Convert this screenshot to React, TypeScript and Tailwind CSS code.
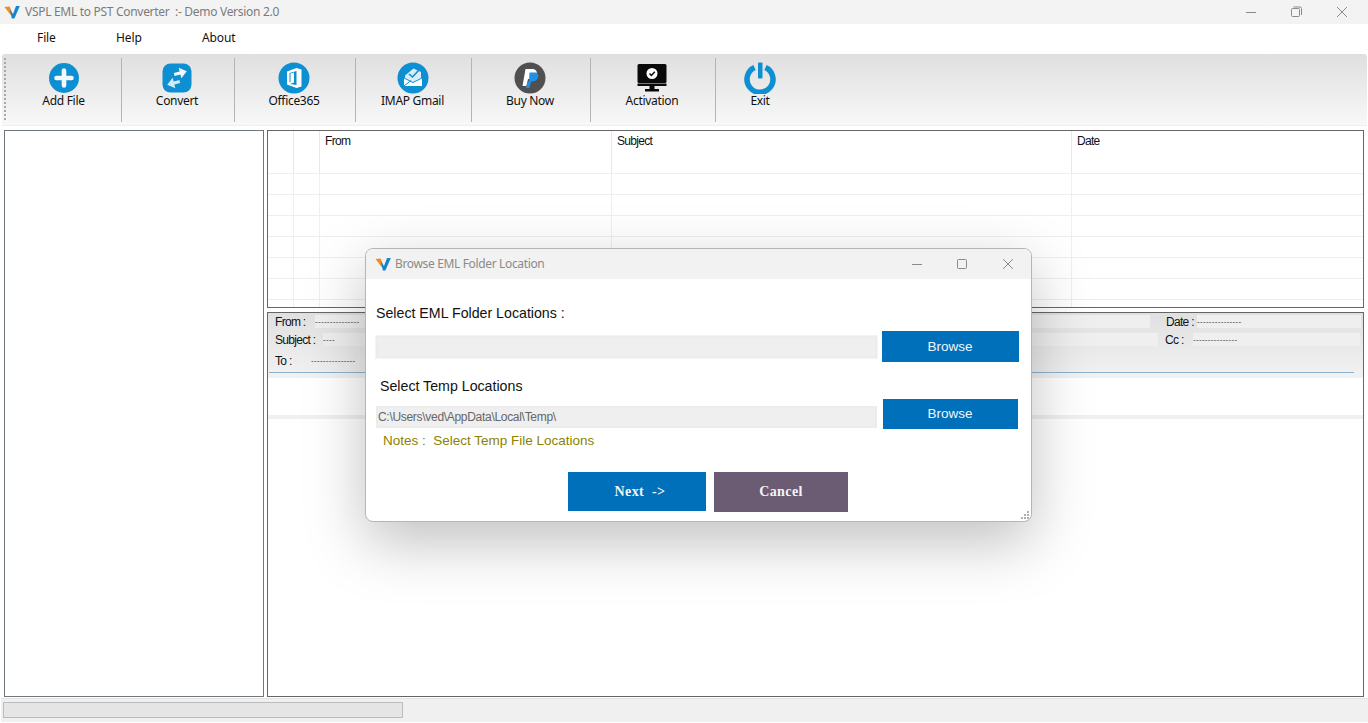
import React from 'react';

const Logo = () => (
  <svg width="16" height="14" viewBox="0 0 16 14">
    <path d="M0.5 2 L5.5 1.5 L8.2 7.5 L6.6 10 Z" fill="#f28c1e" />
    <path d="M5.8 4.5 L9 9 L12 1 L15.8 1 L10.4 13.5 L7.8 13.5 Z" fill="#1386cf" />
  </svg>
);

const AddIcon = () => (
  <svg width="30" height="30" viewBox="0 0 30 30">
    <circle cx="15" cy="15" r="15" fill="#0d8fd1" />
    <path d="M15 7.5 V22.5 M7.5 15 H22.5" stroke="#f2f8fc" strokeWidth="4.6" strokeLinecap="round" />
  </svg>
);

const ConvertIcon = () => (
  <svg width="30" height="30" viewBox="0 0 30 30">
    <rect x="0.5" y="0.5" width="29" height="29" rx="8" fill="#0d8fd1" />
    <path d="M12 11.5 L12 8.5 H18 V4.5 L25 10 L18 15.5 V11.5 Z" fill="#f2f8fc" transform="rotate(-14 18 10)" />
    <path d="M18 18.5 V21.5 H12 V25.5 L5 20 L12 14.5 V18.5 Z" fill="#d5e9f6" transform="rotate(-14 12 20)" />
  </svg>
);

const OfficeIcon = () => (
  <svg width="32" height="32" viewBox="0 0 32 32">
    <circle cx="16" cy="16" r="15.5" fill="#0d8fd1" />
    <path d="M18.5 6 L9 9.5 V22.5 L18.5 26 L23.5 24.5 V7.5 Z M18.5 9 V23 L12 22 L16 20.5 V10.5 L12.5 11.5 V20 L11.5 20.6 V11 Z" fill="#fff" fillRule="evenodd" />
  </svg>
);

const ImapIcon = () => (
  <svg width="32" height="32" viewBox="0 0 32 32">
    <circle cx="16" cy="16" r="15.5" fill="#0d8fd1" />
    <path d="M8 13.5 L16.5 6.5 L24 10 V16 L16 20 L8 16 Z" fill="#d9edf8" />
    <path d="M12 12 L15.5 15 L21.5 8.5" stroke="#0d8fd1" strokeWidth="1.6" fill="none" />
    <path d="M7 16.5 L16 21 L25 16.5 V24 H7 Z" fill="#fff" />
    <path d="M7 24 L14 18.5" stroke="#0d8fd1" strokeWidth="1" />
  </svg>
);

const PaypalIcon = () => (
  <svg width="32" height="32" viewBox="0 0 32 32">
    <circle cx="16" cy="16" r="15.5" fill="#505050" />
    <path d="M11.5 7 H18 C22 7 23.5 9.5 22.5 12.5 C21.5 16 18.5 17 15.5 17 H14 L12.5 24 H8.5 Z" fill="#fff" />
    <path d="M15.5 10.5 H20.5 C24 10.5 25 13 24 15.5 C23 18.5 20.5 19.5 18 19.5 H17 L15.5 26 H12 L13 21.5 L15 19 Z" fill="#1e90e8" />
  </svg>
);

const MonitorIcon = () => (
  <svg width="30" height="28" viewBox="0 0 30 28">
    <rect x="0.5" y="0" width="29" height="19" rx="1.5" fill="#0a0a0a" />
    <rect x="0.5" y="19.5" width="29" height="2.5" fill="#0a0a0a" />
    <rect x="12.5" y="22" width="5" height="3" fill="#0a0a0a" />
    <rect x="8" y="25" width="14" height="2.5" fill="#0a0a0a" />
    <circle cx="15" cy="9.5" r="5.5" fill="#fff" />
    <path d="M12.5 9.5 L14.4 11.5 L17.8 7.8" stroke="#0a0a0a" strokeWidth="1.5" fill="none" />
  </svg>
);

const PowerIcon = () => (
  <svg width="32" height="32" viewBox="0 0 32 32">
    <path d="M10.5 5.5 A13 13 0 1 0 21.5 5.5" stroke="#0d8fd1" strokeWidth="5.5" fill="none" />
    <rect x="14" y="0.5" width="4.5" height="16" rx="0.8" fill="#0d8fd1" />
  </svg>
);

const tools = [
  { label: 'Add File', width: 'w-[114px]', icon: <AddIcon /> },
  { label: 'Convert', width: 'w-[113px]', icon: <ConvertIcon /> },
  { label: 'Office365', width: 'w-[121px]', icon: <OfficeIcon /> },
  { label: 'IMAP Gmail', width: 'w-[116px]', icon: <ImapIcon /> },
  { label: 'Buy Now', width: 'w-[119px]', icon: <PaypalIcon /> },
  { label: 'Activation', width: 'w-[125px]', icon: <MonitorIcon /> },
  { label: 'Exit', width: 'w-[88px]', icon: <PowerIcon /> },
];

const rows = [0, 1, 2, 3, 4, 5, 6];

const Cells = ({ border }: { border: string }) => (
  <>
    <div className={`w-[26px] shrink-0 border-r ${border}`} />
    <div className={`w-[26px] shrink-0 border-r ${border}`} />
    <div className={`w-[292px] shrink-0 border-r ${border}`} />
    <div className={`w-[460px] shrink-0 border-r ${border}`} />
    <div className="flex-1" />
  </>
);

const Dashes = () => <span className="text-[8px] leading-none tracking-[0.3px] text-[#333]">---------------</span>;

const CaptionButtons = ({ restore }: { restore: boolean }) => (
  <svg width="110" height="14" viewBox="0 0 110 14" fill="none" stroke="#8a8a8a" strokeWidth="1">
    <path d="M0 7.5 H10" />
    {restore ? (
      <>
        <rect x="45.5" y="3.5" width="8" height="8" rx="1" />
        <path d="M47.5 2 H54 Q55.5 2 55.5 3.5 V10" />
      </>
    ) : (
      <rect x="45.5" y="2.5" width="9" height="9" rx="1" />
    )}
    <path d="M91 2 L101 12 M101 2 L91 12" />
  </svg>
);

export default function App() {
  return (
    <div className="relative w-[1368px] h-[723px] overflow-hidden bg-white flex flex-col font-['Noto_Sans',sans-serif]">
      {/* title bar */}
      <div className="h-[24px] shrink-0 bg-[#f3f3f3] flex items-center pl-[4px] relative">
        <Logo />
        <span className="ml-[5px] text-[12px] text-[#7b7b7b] whitespace-pre tracking-[-0.3px]">VSPL EML to PST Converter  :- Demo Version 2.0</span>
        <div className="ml-auto mr-[12px]">
          <CaptionButtons restore />
        </div>
      </div>

      {/* menu */}
      <div className="h-[30px] shrink-0 flex items-center text-[12px] text-[#111] pl-[37px] pb-[2px] tracking-[-0.1px]">
        <span className="w-[79px]">File</span>
        <span className="w-[86px]">Help</span>
        <span>About</span>
      </div>

      {/* toolbar */}
      <div className="h-[72px] shrink-0 ml-[2px] mr-[1px] flex bg-gradient-to-b from-[#dfdfdf] to-[#f8f8f8] rounded-t-[3px] border-b border-[#f0f0f0]">
        <div className="w-[4px] shrink-0 ml-[2px] mt-[4px] h-[62px] border-l-2 border-dotted border-[#a8a8a8]" />
        {tools.map((t, i) => (
          <div key={t.label} className={`${t.width} shrink-0 flex flex-col items-center pt-[5px] h-[64px] mt-[4px] ${i < tools.length - 1 ? 'border-r border-[#b4b4b4] pr-[2px]' : ''}`}>
            <div className="h-[32px] flex items-center justify-center -mt-[1px]">{t.icon}</div>
            <span className="-mt-[1px] text-[12px] leading-[16px] text-[#111] tracking-[-0.3px]">{t.label}</span>
          </div>
        ))}
      </div>

      {/* panels */}
      <div className="flex-1 min-h-0 flex gap-[3px] pl-[4px] pr-[4px] pt-[4px] pb-[1px]">
        <div className="w-[260px] shrink-0 border border-[#6f777c] bg-white" />
        <div className="flex-1 min-w-0 flex flex-col gap-[4px]">
          {/* message list */}
          <div className="h-[178px] shrink-0 border border-[#666] flex flex-col overflow-hidden">
            <div className="h-[42px] shrink-0 flex text-[12px] text-[#111] font-['Liberation_Sans',sans-serif] tracking-[-0.7px]">
              <div className="w-[26px] shrink-0 border-r border-[#e8e8e8]" />
              <div className="w-[26px] shrink-0 border-r border-[#e8e8e8]" />
              <div className="w-[292px] shrink-0 border-r border-[#e8e8e8] pl-[5px] pt-[1px]">From</div>
              <div className="w-[460px] shrink-0 border-r border-[#e8e8e8] pl-[5px] pt-[1px]">Subject</div>
              <div className="flex-1 pl-[5px] pt-[1px]">Date</div>
            </div>
            {rows.map((r) => (
              <div key={r} className="h-[21px] shrink-0 flex border-t border-[#efefef]">
                <Cells border="border-[#efefef]" />
              </div>
            ))}
          </div>

          {/* message detail */}
          <div className="flex-1 min-h-0 border border-[#666] flex flex-col">
            <div className="h-[65px] shrink-0 bg-gradient-to-b from-[#e0e0e0] to-[#f2f2f2] text-[12px] leading-[14px] text-[#111] font-['Liberation_Sans',sans-serif] tracking-[-0.7px] flex flex-col">
              <div className="flex items-center h-[13px] mt-[2px] pl-[7px]">
                <span className="w-[40px] shrink-0">From :</span>
                <div className="w-[835px] h-[13px] bg-[#efefef] flex items-center shrink-0"><Dashes /></div>
                <span className="ml-[16px] w-[31px] shrink-0">Date :</span>
                <div className="w-[164px] h-[13px] bg-[#efefef] flex items-center"><Dashes /></div>
              </div>
              <div className="flex items-center h-[13px] mt-[5px] pl-[7px]">
                <span className="w-[48px] shrink-0">Subject :</span>
                <div className="w-[835px] h-[13px] bg-[#efefef] flex items-center shrink-0">
                  <span className="text-[8px] leading-none tracking-[0.3px] text-[#333]">----</span>
                </div>
                <span className="ml-[7px] w-[28px] shrink-0">Cc :</span>
                <div className="w-[167px] h-[13px] bg-[#efefef] flex items-center"><Dashes /></div>
              </div>
              <div className="flex items-center h-[14px] mt-[8px] pl-[7px]">
                <span className="w-[36px] shrink-0">To :</span>
                <Dashes />
              </div>
              <div className="mt-[4px] h-[1px] mr-[9px] ml-[1px] bg-[#8db2cf]" />
            </div>
            <div className="h-[37px] shrink-0 bg-white" />
            <div className="h-[4px] shrink-0 bg-[#f0f0f0]" />
            <div className="flex-1 bg-white" />
          </div>
        </div>
      </div>

      {/* status bar */}
      <div className="h-[24px] shrink-0 mb-[1px] ml-[1px] bg-[#f0f0f0] border-t border-[#e4e4e4] pl-[2px] pt-[3px]">
        <div className="w-[400px] h-[16px] bg-[#e5e5e5] border border-[#bcbcbc]" />
      </div>

      {/* dialog window */}
      <div className="absolute left-[365px] top-[248px] w-[667px] h-[274px] bg-white rounded-[8px] border border-[#b5b5b5] shadow-[0_20px_60px_rgba(0,0,0,0.25)] flex flex-col overflow-hidden">
        <div className="h-[30px] shrink-0 bg-[#f2f2f2] flex items-center pl-[9px]">
          <Logo />
          <span className="ml-[4px] text-[12px] text-[#8a8a8a] tracking-[-0.35px]">Browse EML Folder Location</span>
          <div className="ml-auto mr-[9px]">
            <CaptionButtons restore={false} />
          </div>
        </div>
        <div className="flex-1 relative flex flex-col pl-[10px] font-['Liberation_Sans',sans-serif]">
          <div className="mt-[26px] text-[14.2px] leading-[17px] text-[#111]">Select EML Folder Locations :</div>
          <div className="mt-[9px] flex items-center">
            <div className="w-[501px] h-[22px] bg-[#efefef] border-2 border-[#ececec] outline outline-1 outline-[#f4f4f4]" />
            <button className="ml-[5px] w-[137px] h-[31px] bg-[#0070ba] text-[#eef6fb] text-[13.5px] pt-[1px] pr-[1px]">Browse</button>
          </div>
          <div className="mt-[16px] ml-[4px] text-[14.2px] leading-[17px] text-[#111]">Select Temp Locations</div>
          <div className="mt-[4px] flex items-start">
            <div className="mt-[7px] w-[501px] h-[22px] bg-[#efefef] border-2 border-[#ececec] text-[12px] leading-[18px] text-[#666] flex items-center tracking-[-0.3px]">
              {'C:\\Users\\ved\\AppData\\Local\\Temp\\'}
            </div>
            <button className="ml-[6px] w-[135px] h-[30px] bg-[#0070ba] text-[#eef6fb] text-[13.5px] pt-[1px] pr-[1px]">Browse</button>
          </div>
          <div className="mt-[4px] ml-[7px] text-[13.5px] leading-[16px] text-[#8c8200] whitespace-pre">Notes :  Select Temp File Locations</div>
          <div className="mt-[23px] ml-[192px] flex items-start gap-[8px] font-['Liberation_Serif',serif] font-bold text-[14px] text-[#f2f4f7] tracking-[0.4px]">
            <button className="w-[138px] h-[39px] bg-[#0070ba] pl-[6px]">Next&nbsp; -&gt;</button>
            <button className="w-[134px] h-[40px] bg-[#6b5b73] pb-[1px]">Cancel</button>
          </div>
          <svg className="absolute right-[1px] bottom-[1px]" width="10" height="10" viewBox="0 0 10 10" fill="#b0b0b0">
            <rect x="7" y="1" width="2" height="2" />
            <rect x="4" y="4" width="2" height="2" />
            <rect x="7" y="4" width="2" height="2" />
            <rect x="1" y="7" width="2" height="2" />
            <rect x="4" y="7" width="2" height="2" />
            <rect x="7" y="7" width="2" height="2" />
          </svg>
        </div>
      </div>
    </div>
  );
}
